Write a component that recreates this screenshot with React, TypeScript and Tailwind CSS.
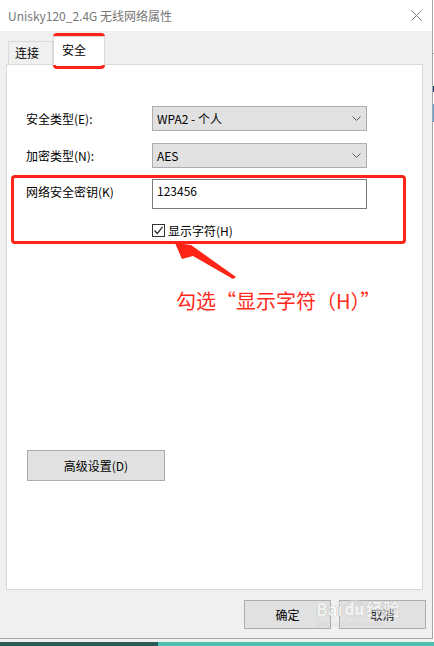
import React from "react";

function Chevron() {
  return (
    <svg width="9" height="5" viewBox="0 0 9 5" className="block">
      <path d="M0.5 0.5 L4.5 4.5 L8.5 0.5" fill="none" stroke="#5a5a5a" strokeWidth="1" />
    </svg>
  );
}

function Select({ value }: { value: string }) {
  return (
    <div className="w-[215px] h-[25px] bg-[#e1e1e1] border border-[#adadad] flex items-center justify-between pl-[4px] pr-[5px]">
      <span className="leading-[16px]">{value}</span>
      <Chevron />
    </div>
  );
}

export default function App() {
  return (
    <div className="w-[434px] h-[646px] flex flex-col bg-[#f0f0f0] font-['Noto_Sans_CJK_SC',sans-serif] text-[12px] text-black relative overflow-hidden">
      <div className="flex h-[642px]">
        {/* window */}
        <div className="w-[433px] h-[639px] border-r border-b border-[#a5a5a5] flex flex-col">
          {/* title bar */}
          <div className="h-[31px] bg-white flex items-center justify-between pl-[8px] pr-[10px] shrink-0">
            <span className="text-[#777777] leading-[16px]">Unisky120_2.4G 无线网络属性</span>
            <svg width="11" height="11" viewBox="0 0 11 11" className="block">
              <path d="M0.5 0.5 L10.5 10.5 M10.5 0.5 L0.5 10.5" stroke="#7a7a7a" strokeWidth="1" />
            </svg>
          </div>
          {/* body */}
          <div className="flex-1 bg-[#f0f0f0] flex flex-col">
            {/* tabs */}
            <div className="h-[33px] flex items-end pl-[8px] shrink-0">
              <div className="w-[45px] h-[23px] border border-b-0 border-[#d9d9d9] bg-[#f0f0f0] flex items-center pl-[6px] leading-[16px]">
                连接
              </div>
              <div className="w-[52px] h-[29px] -mb-[1px] relative z-10 border border-b-0 border-[#d9d9d9] bg-white pl-[8px] pt-[5px] leading-[16px]">
                安全
              </div>
            </div>
            {/* panel */}
            <div className="ml-[6px] w-[417px] h-[526px] bg-white border border-[#d9d9d9] pt-[41px] pl-[19px] flex flex-col shrink-0">
              <div className="flex items-center h-[25px]">
                <span className="w-[126px] leading-[16px]">安全类型(E):</span>
                <Select value="WPA2 - 个人" />
              </div>
              <div className="flex items-center h-[25px] mt-[12px]">
                <span className="w-[126px] leading-[16px]">加密类型(N):</span>
                <Select value="AES" />
              </div>
              <div className="flex items-start mt-[11px]">
                <span className="w-[126px] leading-[16px] mt-[5px]">网络安全密钥(K)</span>
                <div className="w-[215px] h-[30px] bg-white border border-[#7a7a7a] pl-[4px] pt-[3px] leading-[16px]">
                  123456
                </div>
              </div>
              <div className="flex items-center mt-[15px] ml-[126px] h-[13px]">
                <div className="w-[13px] h-[13px] border border-[#333333] bg-white flex items-center justify-center">
                  <svg width="11" height="11" viewBox="0 0 11 11" className="block">
                    <path d="M1.5 5.5 L4.3 8.5 L9.5 1.8" fill="none" stroke="#222222" strokeWidth="1.2" />
                  </svg>
                </div>
                <span className="ml-[3px] leading-[16px]">显示字符(H)</span>
              </div>
              <div className="mt-[213px] ml-[1px] w-[138px] h-[31px] bg-[#e1e1e1] border border-[#adadad] flex items-center justify-center leading-[16px]">
                高级设置(D)
              </div>
            </div>
            {/* bottom buttons */}
            <div className="flex justify-end gap-[8px] mt-[10px] pr-[6px]">
              <div className="w-[87px] h-[29px] bg-[#e1e1e1] border border-[#adadad] flex items-center justify-center leading-[16px]">
                确定
              </div>
              <div className="w-[87px] h-[29px] bg-[#e1e1e1] border border-[#adadad] flex items-center justify-center leading-[16px]">
                取消
              </div>
            </div>
          </div>
        </div>
        {/* background sliver */}
        <div className="w-[1px] flex flex-col bg-white">
          <div className="h-[53px]" />
          <div className="h-[1px] bg-[#9a9a9a]" />
          <div className="h-[32px]" />
          <div className="h-[6px] bg-[#1d3c6e]" />
          <div className="h-[12px]" />
          <div className="h-[18px] bg-[#5b9be0]" />
        </div>
      </div>
      {/* taskbar strip */}
      <div className="flex h-[4px]">
        <div className="w-[158px] bg-[#2a5a55]" />
        <div className="flex-1 bg-[#4fbfb0]" />
      </div>

      {/* annotations (overlay) */}
      <div className="absolute left-[53px] top-[33px] w-[52px] h-[36px] border-[3px] border-[#ff2418] rounded-[4px]" />
      <div className="absolute left-[11px] top-[175px] w-[395px] h-[69px] border-[3px] border-[#ff2418] rounded-[4px]" />
      <svg className="absolute left-0 top-0" width="434" height="646" viewBox="0 0 434 646">
        <polygon points="175,243 191,245 236,277 233,279 193,256 182,259" fill="#ff2418" />
      </svg>
      <div className="absolute left-[176px] top-[288px] text-[20px] leading-[26px] text-[#ff2a1a] whitespace-nowrap">
        勾选“显示字符（H）”
      </div>

      {/* watermark */}
      <div className="absolute left-[316px] top-[592px] flex flex-col items-start opacity-60 pointer-events-none">
        <div className="flex items-end h-[26px]">
          <span className="text-[17px] leading-[18px] font-bold text-white [text-shadow:0_0_1px_#9a9a9a,0_0_1px_#9a9a9a]">Bai</span>
          <span className="text-[15px] leading-[18px] font-bold text-white bg-[#d8d8d8] rounded-full px-[2px]">du</span>
          <span className="text-[17px] leading-[18px] font-bold text-white [text-shadow:0_0_1px_#9a9a9a,0_0_1px_#9a9a9a]">经验</span>
        </div>
        <span className="text-[9px] leading-[10px] text-[#d0d0d0] font-['Liberation_Serif',serif]">jingyan.baidu.com</span>
      </div>
    </div>
  );
}
